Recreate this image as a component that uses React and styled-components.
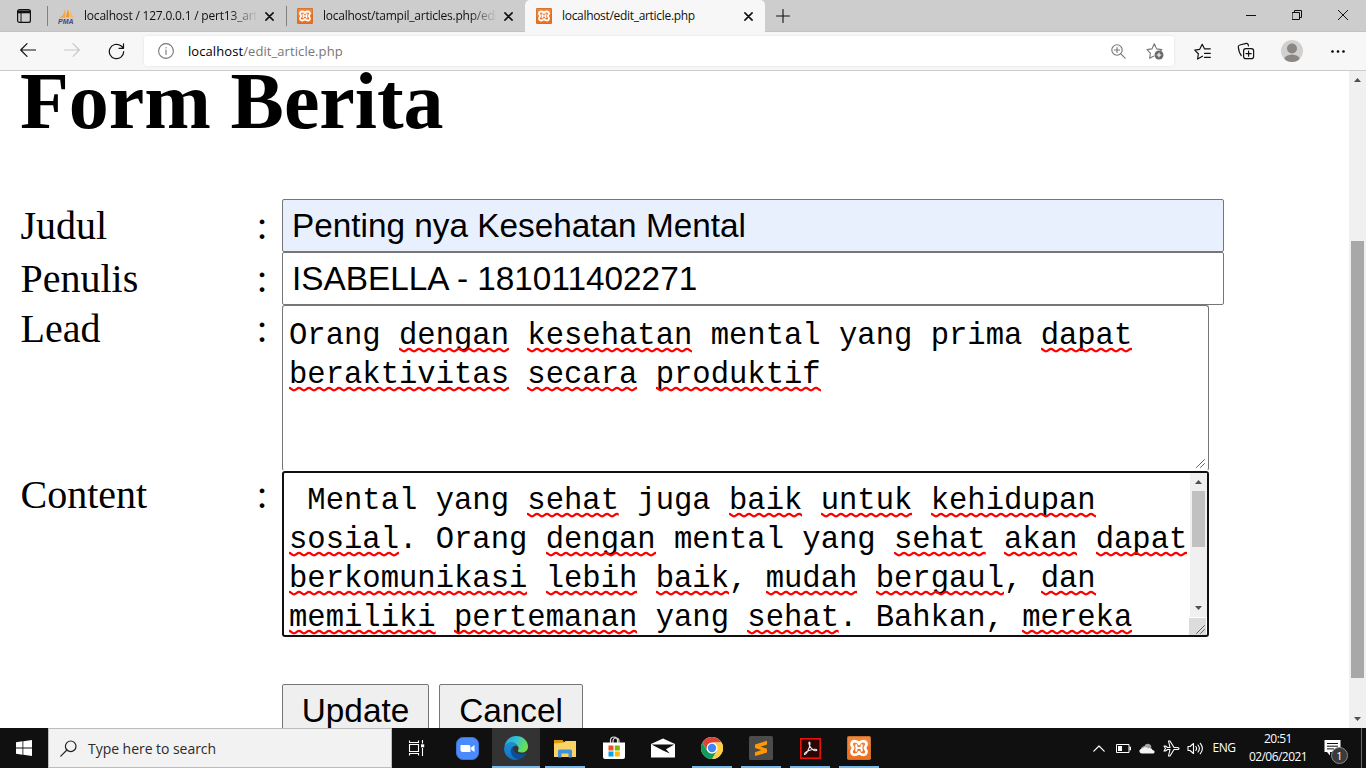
import React from "react";
import styled, { createGlobalStyle } from "styled-components";

const Global = createGlobalStyle`
  * { box-sizing: border-box; }
  html, body, #root { height: 100%; }
  body { margin: 0; overflow: hidden; background: #fff; }
  svg { display: block; flex: none; }
`;

const ui = `"Open Sans", "Noto Sans", sans-serif`;

const Screen = styled.div`
  width: 1366px;
  height: 768px;
  display: flex;
  flex-direction: column;
  overflow: hidden;
  font-family: ${ui};
`;

/* ---------- tab strip ---------- */
const TabStrip = styled.div`
  height: 32px;
  flex: none;
  display: flex;
  background: #cdcdcd;
  box-shadow: inset 0 -1px 0 #c2c2c2;
`;
const TabActions = styled.div`
  width: 47px;
  display: flex;
  align-items: center;
  justify-content: center;
`;
const Divider = styled.div`
  width: 1px;
  height: 20px;
  margin-top: 6px;
  background: #808080;
`;
const Tab = styled.div`
  width: ${(p) => p.$w}px;
  height: 32px;
  display: flex;
  align-items: center;
  padding: 0 11px 0 ${(p) => p.$pad || 10}px;
  background: ${(p) => (p.$active ? "#f7f7f7" : "transparent")};
  border-radius: 5px 5px 0 0;
`;
const TabTitle = styled.div`
  flex: 1;
  min-width: 0;
  margin-left: 10px;
  font-size: 12px;
  line-height: 18px;
  letter-spacing: ${(p) => p.$ls || -0.31}px;
  white-space: pre;
  overflow: hidden;
  color: #101010;
  mask-image: ${(p) => (p.$fade ? "linear-gradient(90deg,#000 84%,transparent 100%)" : "none")};
`;
const TabClose = styled.div`
  width: 22px;
  display: flex;
  justify-content: center;
  margin-right: -5px;
`;
const NewTab = styled.div`
  width: 35px;
  display: flex;
  align-items: center;
  justify-content: center;
`;
const WindowButtons = styled.div`
  display: flex;
  margin-left: auto;
  height: 29px;
`;
const WindowButton = styled.div`
  width: 46px;
  display: flex;
  align-items: center;
  justify-content: center;
`;

/* ---------- toolbar ---------- */
const Toolbar = styled.div`
  height: 39px;
  flex: none;
  display: flex;
  align-items: center;
  background: #f7f7f7;
  border-bottom: 1px solid #cbcbcb;
`;
const ToolButton = styled.div`
  width: ${(p) => p.$w || 44}px;
  display: flex;
  justify-content: center;
`;
const NavGroup = styled.div`
  display: flex;
  width: 144px;
  padding-left: 6px;
`;
const ActionGroup = styled.div`
  display: flex;
  align-items: center;
  padding-left: 6px;
`;
const AddressBar = styled.div`
  width: 1030px;
  height: 30px;
  display: flex;
  align-items: center;
  padding: 0 10px 0 14px;
  background: #fff;
  border-radius: 3px;
  box-shadow: 0 0 3px rgba(0, 0, 0, 0.09);
`;
const Url = styled.div`
  flex: 1;
  margin-left: 14px;
  font-size: 13px;
  line-height: 20px;
  color: #767676;
  letter-spacing: 0.08px;
  b { font-weight: 400; color: #000; }
`;
const AddressIcons = styled.div`
  display: flex;
  align-items: center;
  gap: 20px;
`;

/* ---------- page ---------- */
const Viewport = styled.div`
  height: 657px;
  flex: none;
  display: flex;
  overflow: hidden;
  background: #fff;
`;
const Page = styled.div`
  flex: 1;
  height: 657px;
  overflow: hidden;
  padding-left: 20px;
  display: flex;
  flex-direction: column;
  color: #000;
  font: 40px/46px "Liberation Serif", serif;
`;
const Heading = styled.h1`
  flex: none;
  margin: 0 0 68px;
  font: bold 80px/60px "Liberation Serif", serif;
  letter-spacing: -0.08px;
`;
const Row = styled.div`
  flex: none;
  height: ${(p) => p.$h}px;
  display: grid;
  grid-template-columns: 236px 26px 1fr;
  align-items: ${(p) => (p.$top ? "start" : "center")};
`;
const Label = styled.div`
  padding: 1px 0 0 0.5px;
`;
const Field = styled.div`
  width: 942px;
  height: 53px;
  padding: 0 9px;
  border: 1px solid #767676;
  border-radius: 2px;
  background: ${(p) => (p.$filled ? "#e8f0fe" : "#fff")};
  font: 33.33px/51px "Liberation Sans", sans-serif;
  white-space: pre;
`;
const Area = styled.div`
  width: 927px;
  height: 166px;
  display: flex;
  position: relative;
  background: #fff;
  border: ${(p) => (p.$focus ? "2px solid #101010" : "1px solid #767676")};
  ${(p) => (p.$focus ? "" : "border-bottom-color: #fff;")}
  border-radius: 3px;
  padding: ${(p) => (p.$focus ? "6px 0 0 5px" : "8px 0 0 6px")};
`;
const AreaText = styled.div`
  flex: 1;
  height: 156px;
  font: 30.55px/45px "Liberation Mono", monospace;
  white-space: pre;
`;
const AreaLine = styled.div`
  height: 39px;
`;
const Misspelled = styled.span`
  position: relative;
  display: inline-block;
  height: 39px;
  vertical-align: top;
`;
const Squiggle = styled.svg`
  position: absolute;
  left: 0;
  bottom: 0;
  width: 100%;
  height: 6px;
  overflow: hidden;
`;
const Grip = styled.div`
  position: absolute;
  right: ${(p) => (p.$focus ? 1 : 2)}px;
  bottom: ${(p) => (p.$focus ? 0 : 1)}px;
  width: 17px;
  height: 17px;
  display: flex;
  align-items: flex-end;
  justify-content: flex-end;
  padding: 0 1px 1px 0;
  background: ${(p) => (p.$focus ? "#dcdcdc" : "transparent")};
`;
const InnerScroll = styled.div`
  width: 17px;
  height: 144px;
  margin: -6px 0 0;
  display: flex;
  flex-direction: column;
  align-items: center;
  background: #f0f0f0;
`;
const ArrowBox = styled.div`
  width: 17px;
  height: 18px;
  display: flex;
  align-items: center;
  justify-content: center;
`;
const InnerThumb = styled.div`
  width: 13px;
  height: 56px;
  margin-bottom: auto;
  background: #c1c1c1;
`;
const Buttons = styled.div`
  flex: none;
  display: flex;
  gap: 10px;
  margin: 47px 0 0 262px;
`;
const FormButton = styled.div`
  width: ${(p) => p.$w}px;
  height: 53px;
  border: 1px solid #767676;
  border-radius: 2px;
  background: #efefef;
  font: 33.33px/51px "Liberation Sans", sans-serif;
  text-align: center;
`;
const PageScroll = styled.div`
  width: 17px;
  display: flex;
  flex-direction: column;
  align-items: center;
  background: #f0f0f0;
`;
const PageThumb = styled.div`
  width: 13px;
  height: 437px;
  margin: 152px 0 auto;
  background: #a8a8a8;
`;

/* ---------- taskbar ---------- */
const Taskbar = styled.div`
  height: 40px;
  flex: none;
  display: flex;
  background: #101010;
  color: #fff;
`;
const Start = styled.div`
  width: 48px;
  display: flex;
  align-items: center;
  justify-content: center;
`;
const Search = styled.div`
  width: 344px;
  height: 40px;
  display: flex;
  align-items: center;
  padding-left: 11px;
  background: #f2f2f2;
  border: 1px solid #bcbcbc;
  color: #2b2b2b;
  font-size: 14px;
  line-height: 20px;
`;
const SearchText = styled.span`
  margin-left: 11px;
  padding-top: 1px;
  letter-spacing: -0.04px;
`;
const TaskView = styled.div`
  width: 51px;
  padding-left: 16px;
  display: flex;
  align-items: center;
`;
const Apps = styled.div`
  display: flex;
  gap: 1px;
`;
const AppButton = styled.div`
  width: 48px;
  height: 40px;
  display: flex;
  align-items: center;
  justify-content: center;
  background-color: ${(p) => (p.$active ? "#333" : "transparent")};
  background-image: ${(p) => (p.$active || p.$open ? "linear-gradient(#76b9ed,#76b9ed)" : "none")};
  background-repeat: no-repeat;
  background-position: bottom center;
  background-size: ${(p) => (p.$active ? 48 : 40)}px 2px;
`;
const Tray = styled.div`
  margin-left: auto;
  display: flex;
  align-items: center;
`;
const TrayItem = styled.div`
  width: 24px;
  display: flex;
  justify-content: center;
`;
const Lang = styled.div`
  width: 36px;
  margin-left: -1px;
  text-align: center;
  font-size: 12px;
  line-height: 16px;
  letter-spacing: -0.4px;
`;
const Clock = styled.div`
  width: 74px;
  margin-left: -2px;
  padding-left: 2px;
  text-align: center;
  font-size: 12px;
  line-height: 18px;
  letter-spacing: -0.55px;
  white-space: nowrap;
`;
const Notice = styled.div`
  position: relative;
  width: 47px;
  height: 40px;
  padding: 12px 0 0 10px;
`;
const NoticeCount = styled.div`
  position: absolute;
  left: 17px;
  top: 19px;
  width: 17px;
  height: 17px;
  border: 1px solid #8c8c8c;
  border-radius: 50%;
  background: #3a3a3a;
  font-size: 11px;
  line-height: 15px;
  text-align: center;
`;
const DesktopEdge = styled.div`
  width: 5px;
  height: 40px;
  border-left: 1px solid #6a6a6a;
`;

/* ---------- drawings ---------- */
const Line = ({ w = 16, h = w, vb, sw = 1.2, c = "#111", children, ...r }) => (
  <svg width={w} height={h} viewBox={vb || `0 0 ${w} ${h}`} fill="none" stroke={c} strokeWidth={sw} strokeLinecap="round" strokeLinejoin="round" {...r}>
    {children}
  </svg>
);

const Xampp = ({ s = 16 }) => (
  <svg width={s} height={s} viewBox="0 0 24 24">
    <rect width="24" height="24" rx="1.8" fill="#c9702f" />
    <rect x="1" y="1" width="22" height="22" rx="1.5" fill="#ee7020" />
    <path d="M1 1h22v8C15 11 8 10 1 14z" fill="#f49a55" opacity=".5" />
    <path
      d="M12 7.800C11 4.600 4.500 4 4.500 8.200c0 2 1.600 2.600 1.600 3.800S4.500 13.800 4.500 15.800c0 4.200 6.500 3.600 7.500.4 1 3.200 7.500 3.800 7.500-.4 0-2-1.600-2.600-1.600-3.800s1.600-1.800 1.600-3.800C19.500 4 13 4.600 12 7.800z"
      fill="none" stroke="#fff" strokeWidth="2.700" strokeLinejoin="round"
    />
    <path d="M9.300 9.300v1.500q0 1.200 1.200 1.200h3q1.200 0 1.200-1.200V9.300M9.300 14.700v-1.500q0-1.200 1.200-1.200M14.700 14.700v-1.500q0-1.200-1.200-1.200" fill="none" stroke="#fff" strokeWidth="2.100" strokeLinecap="round" />
  </svg>
);

const PmaText = styled.text`
  font: italic bold 6.5px "Liberation Sans", sans-serif;
`;
const Pma = () => (
  <svg width="16" height="16" viewBox="0 0 16 16">
    <path d="M6.500.5C7 4 5.500 8 .8 10.300L7 9.600C7.800 6 7.500 3 6.500.5z" fill="#f6a540" />
    <path d="M10 1.500c-1 2.500-1.300 5-2.200 7.800l3.200-.2c.5-3 0-5.500-1-7.600z" fill="#f0962b" />
    <path d="M12 3.500c.5 2 .3 4-.3 5.800l3.800.6C14.800 7.200 13.800 5.200 12 3.500z" fill="#f8b868" />
    <PmaText x="0" y="15.500" textLength="15.500" lengthAdjust="spacingAndGlyphs" fill="#45457c">PMA</PmaText>
  </svg>
);

const Close = ({ s = 9, sw = 1.6 }) => (
  <Line w={s} sw={sw} vb="0 0 9 9"><path d="M.9.9l7.200 7.200M8.100.9L.9 8.100" /></Line>
);

const Arrow = ({ down }) => (
  <svg width="7" height="4" viewBox="0 0 7 4"><path d={down ? "M0 0h7L3.500 4z" : "M0 4h7L3.500 0z"} fill="#505050" /></svg>
);

const GripLines = () => (
  <Line w="9" h="9" vb="0 0 9 9" c="#666" sw="1"><path d="M.5 8.500l8-8M4.500 8.500l4-4" /></Line>
);

const Word = ({ children }) => (
  <Misspelled>
    {children}
    <Squiggle>
      <defs>
        <pattern id="wave" width="10" height="6" patternUnits="userSpaceOnUse">
          <path d="M-5 4.300C-3 4.300-2 1.900 0 1.900S3 4.300 5 4.300 8 1.900 10 1.900s3 2.400 5 2.400" fill="none" stroke="#f00" strokeWidth="2.300" />
        </pattern>
      </defs>
      <rect width="100%" height="6" fill="url(#wave)" />
    </Squiggle>
  </Misspelled>
);

/* Words wrapped in underscores carry a spelling mark. */
const SpellLine = ({ text }) => (
  <AreaLine>
    {text.split("_").map((t, i) => (i % 2 ? <Word key={i}>{t}</Word> : t))}
  </AreaLine>
);

const lead = [
  "Orang _dengan_ _kesehatan_ mental yang prima _dapat_",
  "_beraktivitas_ _secara_ _produktif_",
];
const content = [
  " Mental yang _sehat_ juga _baik_ _untuk_ _kehidupan_",
  "_sosial_. Orang _dengan_ mental yang _sehat_ _akan_ _dapat_",
  "_berkomunikasi_ _lebih_ _baik_, _mudah_ _bergaul_, _dan_",
  "_memiliki_ _pertemanan_ yang _sehat_. Bahkan, _mereka_",
];

const Edge = () => (
  <svg width="24" height="24" viewBox="0 0 24 24">
    <defs>
      <linearGradient id="eg1" x1="0" y1="0" x2="1" y2=".4"><stop offset="0" stopColor="#1aa4e0" /><stop offset=".5" stopColor="#35c1d6" /><stop offset="1" stopColor="#6be04f" /></linearGradient>
      <linearGradient id="eg2" x1="0" y1="0" x2="0" y2="1"><stop offset="0" stopColor="#1b8fd8" /><stop offset="1" stopColor="#1273c8" /></linearGradient>
    </defs>
    <path d="M.4 10.500C1.500 4 6.500 0 12.200 0 19 0 24 5 24 10.500c0 4-3 6-6.500 6-2.500 0-4-1-3.500-2.200.8-1 .8-2 .4-3C13 8 10.500 6.500 7.500 6.500 4.500 6.500 2 8 .4 10.500z" fill="url(#eg1)" />
    <path d="M.1 12C.8 8.500 4 6.400 7.500 6.500c3 0 6 1.800 6.900 4.500-1-1.200-3-1.500-4.200-.7C8 11.500 7.500 14 8.300 16.500c1 3.500 4 6 7.500 6.500C7.500 26-.5 20 .1 12z" fill="url(#eg2)" />
    <path d="M10.200 10.300c-3.500 1.200-4.200 5-2.500 8.400 1.500 3 4.500 4.800 8.100 4.300 2.900-.8 5.200-2.500 6.700-5.200.2-.5-.2-.7-.6-.5-4.500 2.200-10 .8-11.900-2.800-.8-1.700-.7-3 .2-4.200z" fill="#0c4f95" />
  </svg>
);

const Explorer = () => (
  <svg width="22" height="19" viewBox="0 0 22 19">
    <path d="M0 1h8.500l1.500 2H21v4H0z" fill="#d99a11" />
    <path d="M0 4.500L10 3.500 11.500 2H22v16H0z" fill="#fbd264" />
    <path d="M4 18.500V12q0-1.500 1.500-1.500h11Q18 10.500 18 12v6.500h-3.500v-4h-7v4z" fill="#3d93d9" />
  </svg>
);

const Store = () => (
  <svg width="24" height="24" viewBox="0 0 24 24">
    <path d="M8.500 7V4.500a3.500 3.500 0 0 1 7 0V7M11 7V5a3 3 0 0 1 6 0v2" fill="none" stroke="#ddd" strokeWidth="1.200" />
    <path d="M1 6.500h22V21q0 2-2 2H3q-2 0-2-2z" fill="#fff" />
    <path d="M6.500 9.500h5v5h-5z" fill="#f25022" /><path d="M12.800 9.500h5v5h-5z" fill="#7fba00" />
    <path d="M6.500 15.500h5v5h-5z" fill="#00a4ef" /><path d="M12.800 15.500h5v5h-5z" fill="#ffb900" />
  </svg>
);

const Mail = () => (
  <svg width="24" height="20" viewBox="0 0 24 20">
    <path d="M0 6L12 .5 24 6v13.500H0z" fill="#fff" />
    <path d="M.5 6.500h22.800L15 11.200l3.800 4.300L12 12.600z" fill="#101010" />
  </svg>
);

const Chrome = () => (
  <svg width="22" height="22" viewBox="0 0 22 22">
    <circle cx="11" cy="11" r="11" fill="#fff" />
    <path d="M1.470 5.500A11 11 0 0 1 20.530 5.500H11A5.500 5.500 0 0 0 6.240 8.250L5.700 12.800z" fill="#db4437" />
    <path d="M20.530 5.500A11 11 0 0 1 11 22L15.760 13.750A5.500 5.500 0 0 0 11 5.500z" fill="#ffcd40" />
    <path d="M11 22A11 11 0 0 1 1.470 5.500L6.240 13.750A5.500 5.500 0 0 0 15.760 13.750z" fill="#0f9d58" />
    <circle cx="11" cy="11" r="5.300" fill="#fff" /><circle cx="11" cy="11" r="4.200" fill="#4285f4" />
  </svg>
);

const Sublime = () => (
  <svg width="24" height="24" viewBox="0 0 24 24">
    <rect width="24" height="24" rx="1.500" fill="#4b4b4b" />
    <path d="M6 8.500L18 4.800v3.800L11.500 10.700 18 12.800v3.700L6 20v-3.800L12.600 14 6 12z" fill="#ff9800" />
  </svg>
);

const Acrobat = () => (
  <svg width="21" height="21" viewBox="0 0 21 21">
    <rect x=".8" y=".8" width="19.400" height="19.400" fill="#2a0606" stroke="#e8140c" strokeWidth="1.600" />
    <path d="M4.500 16.500c1.500.7 5.500-7 5.500-11 0-2-1.300-2-1.100 0 .3 3 4 7.500 7 7.200 1.700-.3 1-1.500-1-1.400-3.500.1-8.500 1.800-10 3.700-.5.800-.6 1.300-.4 1.500z" fill="none" stroke="#eee" strokeWidth="1.100" />
  </svg>
);

const ZoomApp = () => (
  <svg width="23" height="23" viewBox="0 0 23 23">
    <rect x=".5" y=".5" width="22" height="22" rx="6.500" fill="#4a8cff" stroke="#3d73d6" />
    <path d="M4.500 8h8q2 0 2 2v5h-8q-2 0-2-2zM15.200 10.500L18.500 8v7l-3.300-2.300z" fill="#fff" />
  </svg>
);

export default function App() {
  return (
    <Screen>
      <Global />
      <TabStrip>
        <TabActions>
          <svg width="14" height="14" viewBox="0 0 14 14"><rect x=".6" y=".6" width="12.800" height="12.800" rx="2" fill="none" stroke="#111" strokeWidth="1.200" /><path d="M.6 1.500h12.800v2.800H.6z" fill="#111" /><path d="M4 3v10" stroke="#111" /></svg>
        </TabActions>
        <Divider />
        <Tab $w={238}>
          <Pma />
          <TabTitle $fade $ls={-0.2}>localhost / 127.0.0.1 / pert13_articles</TabTitle>
          <TabClose><Close /></TabClose>
        </Tab>
        <Divider />
        <Tab $w={238}>
          <Xampp />
          <TabTitle $fade $ls={-0.24}>localhost/tampil_articles.php/edit_article</TabTitle>
          <TabClose><Close /></TabClose>
        </Tab>
        <Tab $w={240} $active $pad={11}>
          <Xampp />
          <TabTitle>localhost/edit_article.php</TabTitle>
          <TabClose><Close /></TabClose>
        </Tab>
        <NewTab><Line w="14" sw="1.100"><path d="M7 .5v13M.5 7h13" /></Line></NewTab>
        <WindowButtons>
          <WindowButton><Line w="10" sw="1"><path d="M0 5.500h10" /></Line></WindowButton>
          <WindowButton><Line w="10" sw="1" strokeLinejoin="miter"><path d="M.5 2.500h7v7h-7zM2.500 2.500v-2h7v7h-2" /></Line></WindowButton>
          <WindowButton><Line w="10" sw="1"><path d="M.3.3l9.400 9.400M9.700.3L.3 9.700" /></Line></WindowButton>
        </WindowButtons>
      </TabStrip>

      <Toolbar>
        <NavGroup>
          <ToolButton><Line w="16" h="14"><path d="M15.500 7H.7M7 .7L.7 7 7 13.300" /></Line></ToolButton>
          <ToolButton><Line w="16" h="14" c="#c8c8c8"><path d="M.5 7h14.800M9 .7L15.300 7 9 13.300" /></Line></ToolButton>
          <ToolButton><Line w="17" h="17"><path d="M15.700 8.500a7.200 7.200 0 1 1-2.800-5.700l2.300 2M15.500.8v4.500H11" /></Line></ToolButton>
        </NavGroup>
        <AddressBar>
          <Line w="16" c="#767676" sw="1.100"><circle cx="8" cy="8" r="7.400" /><path d="M8 7v4.500M8 4.600v.3" /></Line>
          <Url><b>localhost</b>/edit_article.php</Url>
          <AddressIcons>
            <Line w="15" c="#767676" sw="1.100"><circle cx="6" cy="6" r="5.200" /><path d="M9.800 9.800l4.400 4.400M6 3.500v5M3.500 6h5" /></Line>
            <svg width="18" height="18" viewBox="0 0 18 18">
              <path d="M8 14l-4.300 2.200.7-5L1 7.600l4.900-.7L8.300 1.700l2.300 5.200 5.200.7-1.600 1.700" fill="none" stroke="#767676" strokeWidth="1.100" strokeLinejoin="round" />
              <circle cx="13" cy="13" r="4.500" fill="#6a6a6a" /><path d="M13 10.700v4.600M10.700 13h4.600" stroke="#fff" strokeWidth="1.100" />
            </svg>
          </AddressIcons>
        </AddressBar>
        <ActionGroup>
          <ToolButton>
            <Line w="17" h="17"><path d="M8.500 13.200L3.600 16l.8-5.300L.7 7.100l5-.8L8.200 1.300l2.300 4.500h5.800M10.500 10.300h5.800M10.500 14.400h5.800" /></Line>
          </ToolButton>
          <ToolButton>
            <Line w="18"><rect x="6.600" y="6.600" width="10" height="10" rx="2.200" /><path d="M11.600 9v5.200M9 11.600h5.200M4.300 13.500C3 12 1.500 7 1.300 5c-.1-1 .5-1.800 1.500-2l6.500-1.600c1-.2 1.800.4 2.200 2.400" /></Line>
          </ToolButton>
          <ToolButton $w={47}>
            <svg width="22" height="22" viewBox="0 0 22 22"><defs><clipPath id="av"><circle cx="11" cy="11" r="11" /></clipPath></defs><g clipPath="url(#av)"><path d="M0 0h22v22H0z" fill="#d2d0ce" /><circle cx="11" cy="8.500" r="5" fill="#8a8684" /><ellipse cx="11" cy="20" rx="8" ry="5.500" fill="#8a8684" /></g></svg>
          </ToolButton>
          <ToolButton $w={45}>
            <svg width="14" height="3" viewBox="0 0 14 3"><circle cx="1.500" cy="1.500" r="1.300" /><circle cx="7" cy="1.500" r="1.300" /><circle cx="12.500" cy="1.500" r="1.300" /></svg>
          </ToolButton>
        </ActionGroup>
      </Toolbar>

      <Viewport>
        <Page>
          <Heading>Form Berita</Heading>
          <Row $h={53}><Label>Judul</Label><Label>:</Label><Field $filled>Penting nya Kesehatan Mental</Field></Row>
          <Row $h={53}><Label>Penulis</Label><Label>:</Label><Field>ISABELLA - 181011402271</Field></Row>
          <Row $h={166} $top>
            <Label>Lead</Label><Label>:</Label>
            <Area>
              <AreaText>{lead.map((t) => <SpellLine key={t} text={t} />)}</AreaText>
              <Grip><GripLines /></Grip>
            </Area>
          </Row>
          <Row $h={166} $top>
            <Label>Content</Label><Label>:</Label>
            <Area $focus>
              <AreaText>{content.map((t) => <SpellLine key={t} text={t} />)}</AreaText>
              <InnerScroll>
                <ArrowBox><Arrow /></ArrowBox>
                <InnerThumb />
                <ArrowBox><Arrow down /></ArrowBox>
              </InnerScroll>
              <Grip $focus><GripLines /></Grip>
            </Area>
          </Row>
          <Buttons><FormButton $w={147}>Update</FormButton><FormButton $w={144}>Cancel</FormButton></Buttons>
        </Page>
        <PageScroll>
          <ArrowBox><Arrow /></ArrowBox>
          <PageThumb />
          <ArrowBox><Arrow down /></ArrowBox>
        </PageScroll>
      </Viewport>

      <Taskbar>
        <Start><svg width="16" height="16" viewBox="0 0 16 16" fill="#fff"><path d="M0 2.200l6.500-.9v6.300H0zM7.300 1.200L16 0v7.600H7.300zM0 8.400h6.500v6.300L0 13.800zM7.300 8.400H16V16l-8.700-1.200z" /></svg></Start>
        <Search>
          <Line w="17" c="#222" sw="1.200"><circle cx="10.700" cy="6.300" r="5.300" /><path d="M6.900 10L.8 16.200" /></Line>
          <SearchText>Type here to search</SearchText>
        </Search>
        <TaskView>
          <svg width="17" height="16" viewBox="0 0 17 16"><path d="M1.500.5v2h9v-2M1.500 15.500v-2h9v2M1.500 4.500h9v7h-9zM14.500 0v3.500M14.500 8v8" fill="none" stroke="#fff" strokeWidth="1.100" /><path d="M13 4.300h3.200v3H13z" fill="#fff" /></svg>
        </TaskView>
        <Apps>
          <AppButton><ZoomApp /></AppButton>
          <AppButton $active><Edge /></AppButton>
          <AppButton $open><Explorer /></AppButton>
          <AppButton><Store /></AppButton>
          <AppButton><Mail /></AppButton>
          <AppButton $open><Chrome /></AppButton>
          <AppButton $open><Sublime /></AppButton>
          <AppButton $open><Acrobat /></AppButton>
          <AppButton $open><Xampp s={24} /></AppButton>
        </Apps>
        <Tray>
          <TrayItem><Line w="12" h="7" c="#fff"><path d="M.8 6.200L6 1l5.200 5.200" /></Line></TrayItem>
          <TrayItem><svg width="15" height="9" viewBox="0 0 15 9"><path d="M.5.500h12.500v8H.5z" fill="none" stroke="#fff" /><path d="M2 2h4v5H2zM13.500 2.800H15v3.400h-1.500z" fill="#fff" /></svg></TrayItem>
          <TrayItem><svg width="16" height="11" viewBox="0 0 16 11"><path d="M2 8C1 4.500 4 3 5.500 3 6.500 0 11.500-.5 12.500 4L8 8z" fill="#a5a5a5" /><path d="M3 10.500c-3.500 0-3.500-4.700.2-4.700 1.500-2 4.500-2 6-.3 2-1 4 0 4.200 1.500 2.800.2 3 3.500.2 3.500z" fill="#f4f4f4" /></svg></TrayItem>
          <TrayItem><Line w="17" h="17" c="#fff" sw="1.100"><path d="M1 6l1.500 2.500L1 11h1.500L4.500 9.500H7L5.500 16H7l4-6.500h3.500q1.500 0 1.500-1t-1.500-1H11L7 1H5.500L7 7.500H4.500L2.500 6z" /></Line></TrayItem>
          <TrayItem><Line w="17" h="13" c="#fff" sw="1.100"><path d="M1 4.500h2l3.500-3v10L3 8.500H1zM8.800 4.500q1.500 2 0 4M11 3q2.800 3.500 0 7M13.300 1.300q4.200 5.200 0 10.400" /></Line></TrayItem>
          <Lang>ENG</Lang>
          <Clock>20:51<br />02/06/2021</Clock>
          <Notice>
            <svg width="17" height="16" viewBox="0 0 17 16"><path d="M.5 0h16v12H6v3.500L3 12H.5z" fill="#fff" /><path d="M3 3.500h11M3 6.200h11M3 8.900h7" stroke="#101010" /></svg>
            <NoticeCount>1</NoticeCount>
          </Notice>
          <DesktopEdge />
        </Tray>
      </Taskbar>
    </Screen>
  );
}
